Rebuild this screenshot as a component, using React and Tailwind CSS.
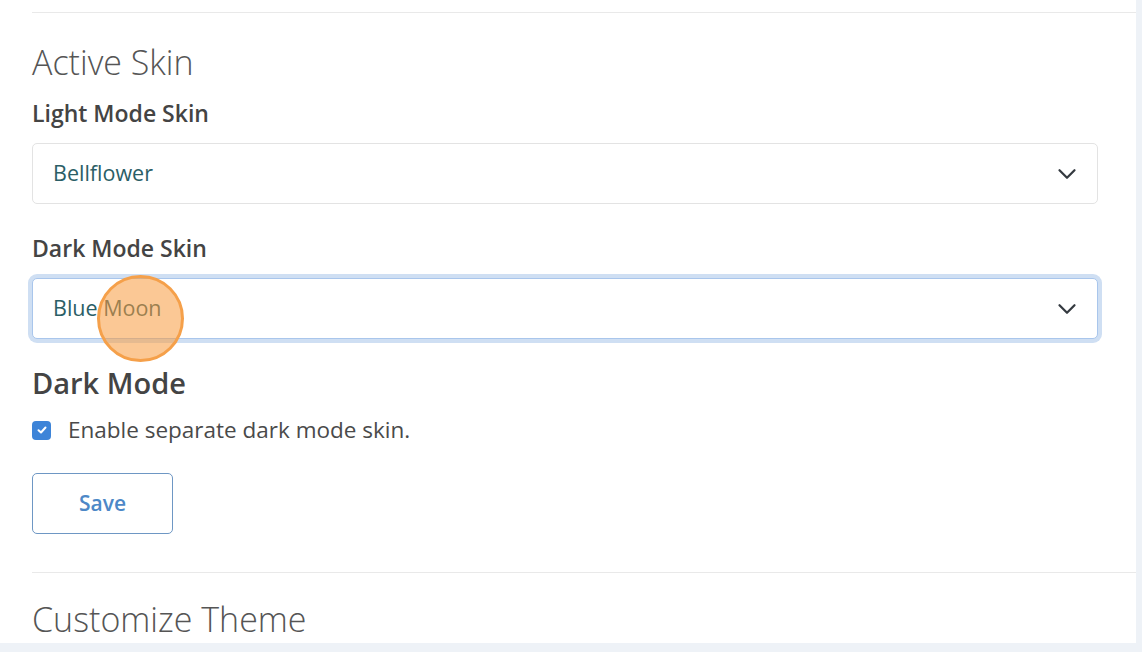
import React from 'react';

const font = { fontFamily: '"Open Sans", "Noto Sans", sans-serif' };

const Chevron = () => (
  <svg width="20" height="20" viewBox="0 0 16 16" fill="none">
    <path d="m2 5 6 6 6-6" stroke="#343a40" strokeWidth="1.8" strokeLinecap="round" strokeLinejoin="round" />
  </svg>
);

const Select = ({ value, focused }) => (
  <div
    className={`flex items-center justify-between h-[61px] pl-5 pr-5 rounded-[5px] bg-white border ${
      focused ? 'border-[#a9c6ec] ring-4 ring-[#cfdff3]' : 'border-[#e3e3e3]'
    }`}
  >
    <span className="text-[21.5px] text-[#2b5e66]">{value}</span>
    <Chevron />
  </div>
);

export default function App() {
  return (
    <div className="w-[1142px] h-[652px] bg-[#eef2f7] overflow-hidden flex" style={font}>
      <div className="w-[1136px] h-[643px] bg-white pl-8 pt-3 shrink-0">
        <div className="border-t border-[#e9e9e9]" />

        <div className="pr-[38px]">
          <h2 className="mt-[29px] text-[34px] leading-[40px] font-light text-[#555]">Active Skin</h2>

          <label className="block mt-[16px] text-[23px] leading-[30px] font-semibold text-[#444]">Light Mode Skin</label>
          <div className="mt-[15px]">
            <Select value="Bellflower" />
          </div>

          <label className="block mt-[29px] text-[23px] leading-[30px] font-semibold text-[#444]">Dark Mode Skin</label>
          <div className="mt-[15px] relative">
            <Select value="Blue Moon" focused />
            {/* click marker */}
            <div className="absolute left-[65px] top-[-3px] w-[87px] h-[87px] rounded-full bg-[#f79a3e]/55 border-[3px] border-[#f5a04a]" />
          </div>

          <h3 className="mt-[26px] text-[29px] leading-[36px] font-semibold text-[#444]">Dark Mode</h3>

          <div className="mt-[14px] h-[30px] flex items-center gap-[17px]">
            <span className="w-[19px] h-[19px] rounded-[4px] bg-[#3d84d8] flex items-center justify-center">
              <svg width="12" height="12" viewBox="0 0 12 12" fill="none">
                <path d="M2.5 6.2 5 8.5l4.5-5" stroke="white" strokeWidth="2" strokeLinecap="round" strokeLinejoin="round" />
              </svg>
            </span>
            <span className="text-[22.5px] leading-[30px] text-[#4a4a4a]">Enable separate dark mode skin.</span>
          </div>

          <button className="mt-[28px] w-[141px] h-[61px] rounded-[5px] border border-[#6e97c4] bg-white text-[21px] font-semibold text-[#4d88c7]">
            Save
          </button>
        </div>

        <div className="mt-[38px] border-t border-[#e9e9e9]" />

        <h2 className="mt-[26px] text-[34px] leading-[40px] font-light text-[#555]">Customize Theme</h2>
      </div>
    </div>
  );
}
